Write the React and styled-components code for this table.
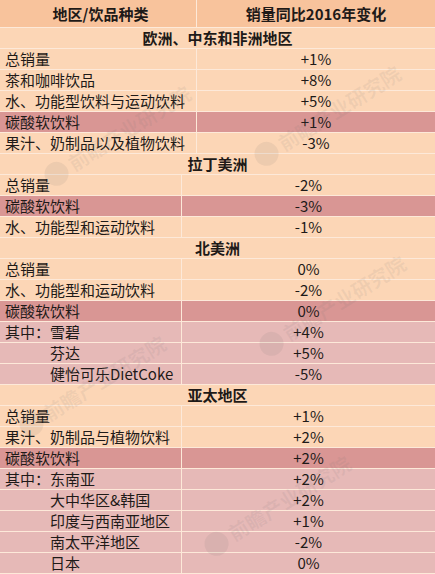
import React from "react";
import styled, { createGlobalStyle } from "styled-components";

const Global = createGlobalStyle`
  html, body { margin: 0; padding: 0; background: #fcd6b6; }
  body { font-family: "Noto Sans CJK SC", "Noto Sans", sans-serif; color: #1e1a18; }
`;

const Page = styled.div`
  position: relative;
  width: 435px;
  height: 574px;
  overflow: hidden;
  background: #fcd6b6;
`;

const Block = styled.div`
  display: flex;
  flex-direction: column;
`;

const tones = {
  base: "#fcd6b6",
  head: "#f8c39c",
  hi: "#d99694",
  sub: "#e6b9b7",
};

const Row = styled.div`
  display: grid;
  grid-template-columns: ${(p) => p.$split}px 1fr;
  height: ${(p) => (p.$tall ? 27 : 20)}px;
  border-bottom: 1px solid #fde9d9;
  background: ${(p) => tones[p.$tone || "base"]};
  font-size: 15px;
  line-height: ${(p) => (p.$tall ? 27 : 20)}px;
`;

const Name = styled.div`
  padding-left: ${(p) => (p.$indent ? 50 : 5)}px;
  border-right: 1px solid #fde9d9;
  white-space: nowrap;
  font-weight: ${(p) => (p.$bold ? 700 : 400)};
  text-align: ${(p) => (p.$center ? "center" : "left")};
`;

const Value = styled.div`
  text-align: center;
  white-space: nowrap;
  font-weight: ${(p) => (p.$bold ? 700 : 400)};
`;

const Section = styled.div`
  height: 20px;
  line-height: 20px;
  border-bottom: 1px solid #fde9d9;
  background: ${tones.base};
  text-align: center;
  font-weight: 700;
  font-size: 15px;
`;

const Mark = styled.div`
  position: absolute;
  left: ${(p) => p.$x}px;
  top: ${(p) => p.$y}px;
  transform: rotate(-32deg);
  transform-origin: left top;
  font-size: 20px;
  line-height: 24px;
  font-weight: 700;
  color: rgba(110, 110, 110, 0.09);
  white-space: nowrap;
  pointer-events: none;
  display: flex;
  align-items: center;
  gap: 4px;
`;

const Logo = styled.span`
  display: inline-block;
  width: 24px;
  height: 24px;
  border-radius: 50%;
  background: rgba(110, 110, 110, 0.1);
`;

const blocks = [
  {
    title: "欧洲、中东和非洲地区",
    split: 197,
    rows: [
      ["总销量", "+1%"],
      ["茶和咖啡饮品", "+8%"],
      ["水、功能型饮料与运动饮料", "+5%"],
      ["碳酸软饮料", "+1%", "hi"],
      ["果汁、奶制品以及植物饮料", "-3%"],
    ],
  },
  {
    title: "拉丁美洲",
    split: 182,
    rows: [
      ["总销量", "-2%"],
      ["碳酸软饮料", "-3%", "hi"],
      ["水、功能型和运动饮料", "-1%"],
    ],
  },
  {
    title: "北美洲",
    split: 182,
    rows: [
      ["总销量", "0%"],
      ["水、功能型和运动饮料", "-2%"],
      ["碳酸软饮料", "0%", "hi"],
      ["其中：雪碧", "+4%", "sub"],
      ["芬达", "+5%", "sub", true],
      ["健怡可乐DietCoke", "-5%", "sub", true],
    ],
  },
  {
    title: "亚太地区",
    split: 182,
    rows: [
      ["总销量", "+1%"],
      ["果汁、奶制品与植物饮料", "+2%"],
      ["碳酸软饮料", "+2%", "hi"],
      ["其中：东南亚", "+2%", "sub"],
      ["大中华区&韩国", "+2%", "sub", true],
      ["印度与西南亚地区", "+1%", "sub", true],
      ["南太平洋地区", "-2%", "sub", true],
      ["日本", "0%", "sub", true],
    ],
  },
];

const marks = [
  { x: 40, y: 170 },
  { x: 250, y: 150 },
  { x: 255, y: 340 },
  { x: 15, y: 420 },
  { x: 200, y: 540 },
];

export default function App() {
  return (
    <Page>
      <Global />
      <Block>
        <Row $split={197} $tone="head" $tall>
          <Name $bold $center>地区/饮品种类</Name>
          <Value $bold>销量同比2016年变化</Value>
        </Row>
      </Block>
      {blocks.map((b) => (
        <Block key={b.title}>
          <Section>{b.title}</Section>
          {b.rows.map(([name, val, tone, indent], i) => (
            <Row key={i} $split={b.split} $tone={tone}>
              <Name $indent={indent}>{name}</Name>
              <Value>{val}</Value>
            </Row>
          ))}
        </Block>
      ))}
      {marks.map((m, i) => (
        <Mark key={i} $x={m.x} $y={m.y}>
          <Logo />
          前瞻产业研究院
        </Mark>
      ))}
    </Page>
  );
}
